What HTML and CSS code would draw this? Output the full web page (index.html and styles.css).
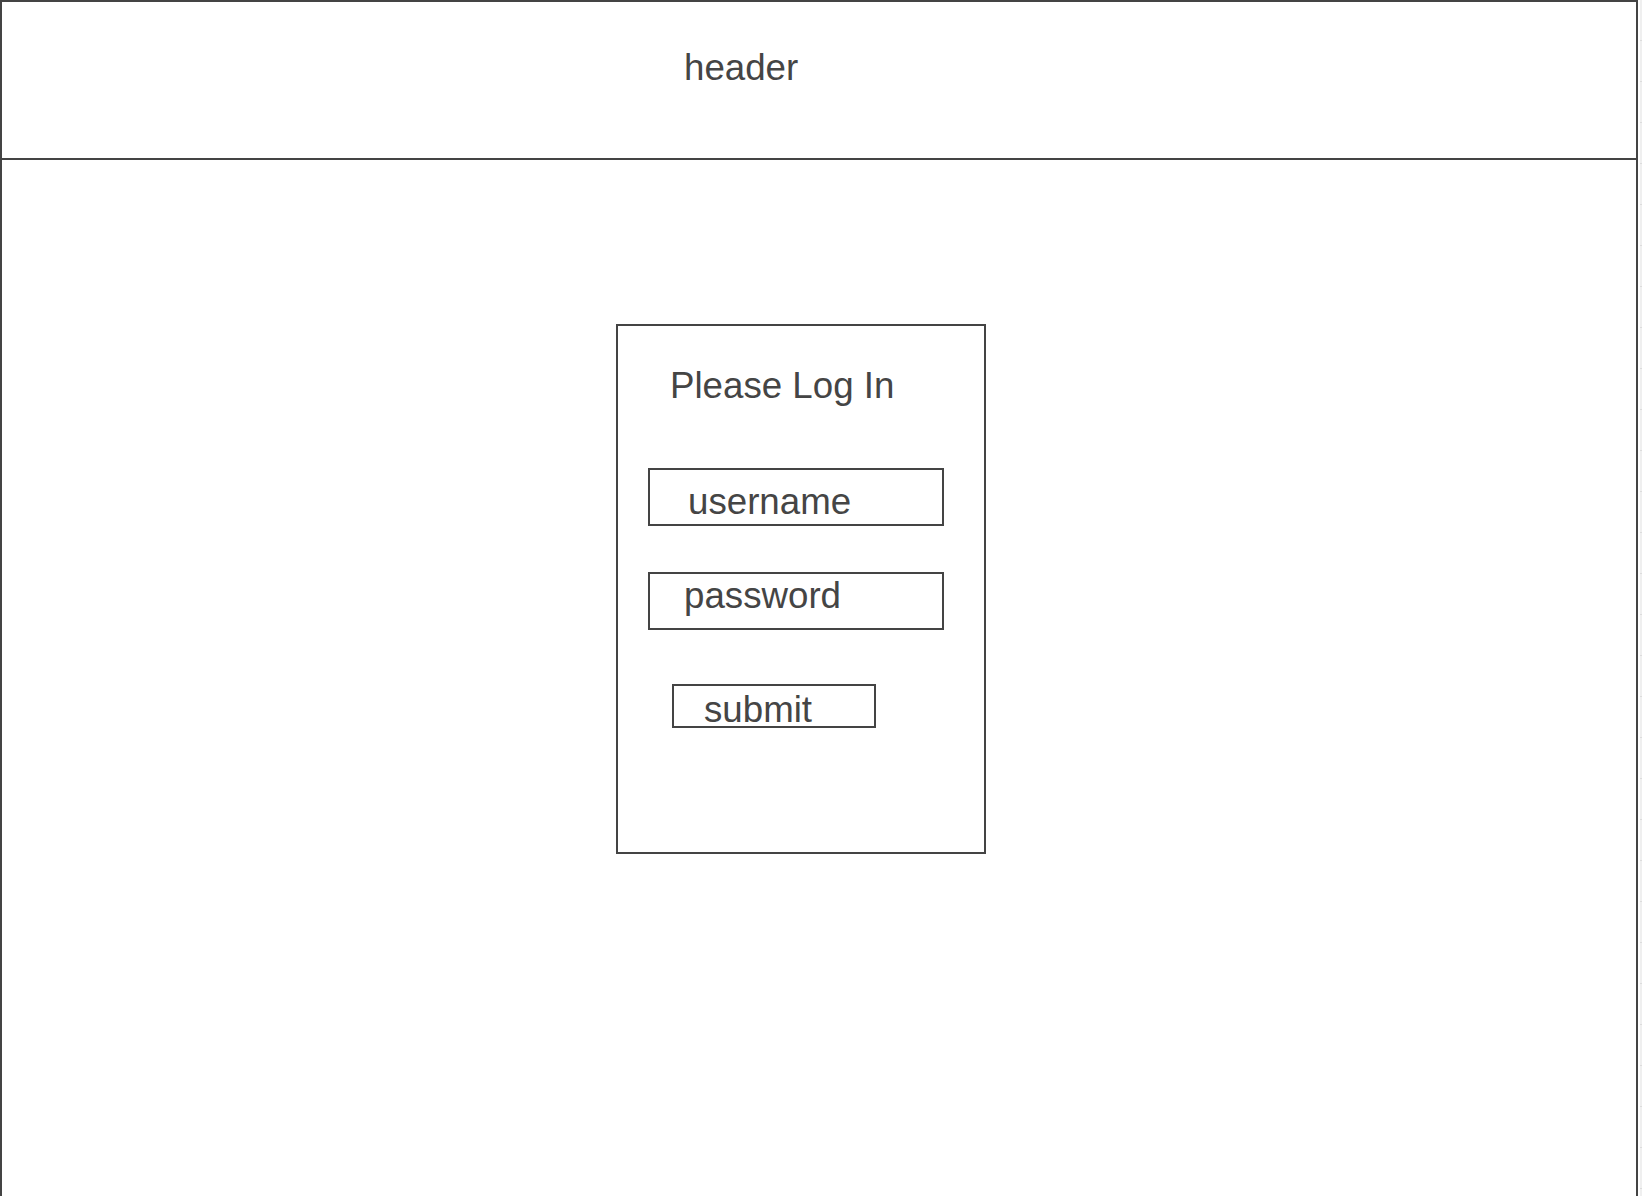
FILE: index.html
```html
<!DOCTYPE html>
<html lang="en">
<head>
<meta charset="utf-8">
<title>Login wireframe</title>
<link rel="stylesheet" href="styles.css">
</head>
<body>
<div class="frame">
  <header class="header">
    <div class="header-title">header</div>
  </header>
  <main class="main">
    <form class="card" onsubmit="return false">
      <div class="card-title">Please Log In</div>
      <div class="field field-user">username</div>
      <div class="field field-pass">password</div>
      <div class="submit">submit</div>
    </form>
  </main>
</div>
<div class="ruler"></div>
</body>
</html>
```
FILE: styles.css
```css
* {
  box-sizing: border-box;
}

html, body {
  margin: 0;
  padding: 0;
  background: #ffffff;
}

body {
  display: flex;
  align-items: stretch;
  min-height: 100vh;
  font-family: "Liberation Sans", Arial, sans-serif;
  color: #454545;
  overflow: hidden;
}

.frame {
  width: 1638px;
  flex: none;
  border: 2px solid #444444;
  border-bottom: none;
  display: flex;
  flex-direction: column;
  min-height: 100vh;
}

.header {
  height: 158px;
  border-bottom: 2px solid #444444;
  padding: 48px 0 0 682px;
  flex: none;
}

.header-title,
.card-title,
.field,
.submit {
  font-size: 36.7px;
  line-height: 36px;
}

.main {
  flex: 1;
  padding: 164px 0 0 614px;
}

.card {
  margin: 0;
  width: 370px;
  height: 530px;
  border: 2px solid #444444;
  padding: 42px 0 0 30px;
  display: flex;
  flex-direction: column;
  align-items: flex-start;
}

.card-title {
  padding-left: 22px;
  margin-bottom: 64px;
}

.field {
  width: 296px;
  height: 58px;
  border: 2px solid #444444;
}

.field-user {
  padding: 14px 0 0 38px;
  margin-bottom: 46px;
}

.field-pass {
  padding: 4px 0 0 34px;
  margin-bottom: 54px;
}

.submit {
  width: 204px;
  height: 44px;
  margin-left: 24px;
  border: 2px solid #444444;
  padding: 6px 0 0 30px;
}

.ruler {
  width: 2px;
  margin-left: 2px;
  flex: none;
  background-color: #efefef;
  background-image: repeating-linear-gradient(
    to bottom,
    transparent 0,
    transparent 40px,
    #dcdcdc 40px,
    #dcdcdc 41px
  );
}
```
